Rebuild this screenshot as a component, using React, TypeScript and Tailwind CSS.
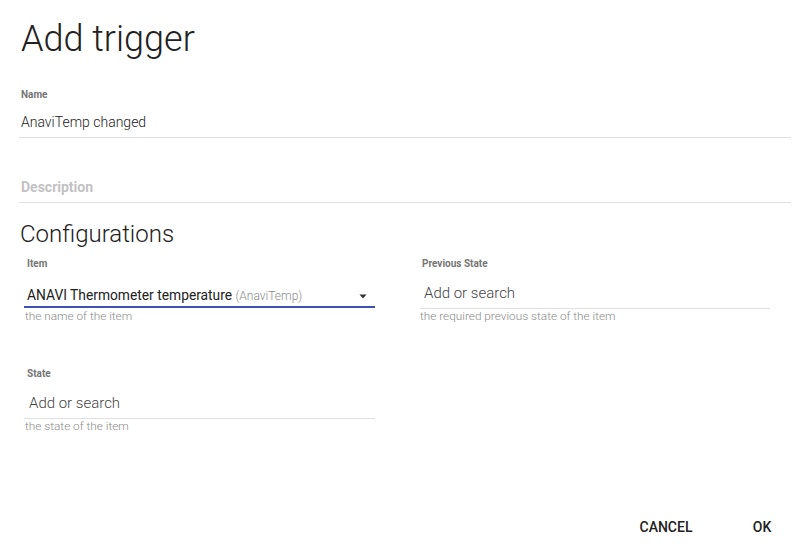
import React from "react";

type AutoFieldProps = {
  label: string;
  helper: string;
  labelPad: string;
  valuePad: string;
  helperPad: string;
};

function AutoField({ label, helper, labelPad, valuePad, helperPad }: AutoFieldProps) {
  return (
    <div className="flex flex-col">
      <div className={`h-[12px] text-[10px] font-bold leading-[12px] text-[#757575] ${labelPad}`}>
        {label}
      </div>
      <div
        className={`mt-[13px] h-[26px] border-b border-[#e0e0e0] pb-[5px] text-[15px] font-light leading-[20px] text-[#444444] ${valuePad}`}
      >
        Add or search
      </div>
      <div className={`h-[14px] text-[11.8px] font-light leading-[14px] text-[#8a8a8a] ${helperPad}`}>
        {helper}
      </div>
    </div>
  );
}

function ItemSelect() {
  return (
    <div className="flex flex-col">
      <div className="h-[12px] pl-[3px] text-[10px] font-bold leading-[12px] text-[#757575]">
        Item
      </div>
      <div className="mt-[15px] flex h-[23px] items-start border-b-2 border-[#3f51b5] pl-[3px]">
        <div className="flex-1 text-[13.8px] leading-[20px] text-[#212121]">
          ANAVI Thermometer temperature{" "}
          <span className="text-[12px] font-light text-[#8a8a8a]">(AnaviTemp)</span>
        </div>
        <svg width="8" height="5" viewBox="0 0 8 5" className="mr-[8px] mt-[9px]">
          <polygon points="0.5,0.5 7.5,0.5 4,4.5" fill="#333333" />
        </svg>
      </div>
      <div className="mt-[1px] h-[14px] pl-[1px] text-[11.8px] font-light leading-[14px] text-[#8a8a8a]">
        the name of the item
      </div>
    </div>
  );
}

export default function App() {
  return (
    <div className="h-[549px] w-[809px] overflow-hidden bg-white font-['Roboto','Liberation_Sans',sans-serif]">
      <div className="pl-[21px] pt-[21px] text-[36px] font-light leading-[36px] text-[#212121]">
        Add trigger
      </div>

      <div className="ml-[19px] mr-[18px] mt-[32px] flex flex-col">
        <div className="h-[12px] pl-[2px] text-[10px] font-bold leading-[12px] text-[#757575]">
          Name
        </div>
        <div className="mt-[11px] h-[26px] border-b border-[#e0e0e0] pl-[2px] text-[14px] font-light leading-[20px] text-[#212121]">
          AnaviTemp changed
        </div>
        <div className="mt-[39px] h-[26px] border-b border-[#e0e0e0] pl-[2px] text-[14px] font-bold leading-[20px] text-[#c2c2c2]">
          Description
        </div>
      </div>

      <div className="pl-[20px] pt-[17px] text-[24px] font-light leading-[28px] text-[#212121]">
        Configurations
      </div>

      <div className="ml-[24px] mt-[10px] grid w-[746px] grid-cols-[351px_350px] gap-x-[45px] gap-y-[45px]">
        <ItemSelect />
        <AutoField
          label="Previous State"
          helper="the required previous state of the item"
          labelPad="pl-[2px]"
          valuePad="pl-[4px]"
          helperPad="pl-0"
        />
        <AutoField
          label="State"
          helper="the state of the item"
          labelPad="pl-[3px]"
          valuePad="pl-[5px]"
          helperPad="pl-[1px]"
        />
      </div>

      <div className="mt-[76px] flex justify-end gap-2 pr-[3px]">
        <button
          type="button"
          className="h-[36px] w-[88px] text-[14px] font-medium leading-[20px] text-[#212121]"
        >
          CANCEL
        </button>
        <button
          type="button"
          className="h-[36px] w-[88px] text-[14px] font-medium leading-[20px] text-[#212121]"
        >
          OK
        </button>
      </div>
    </div>
  );
}
